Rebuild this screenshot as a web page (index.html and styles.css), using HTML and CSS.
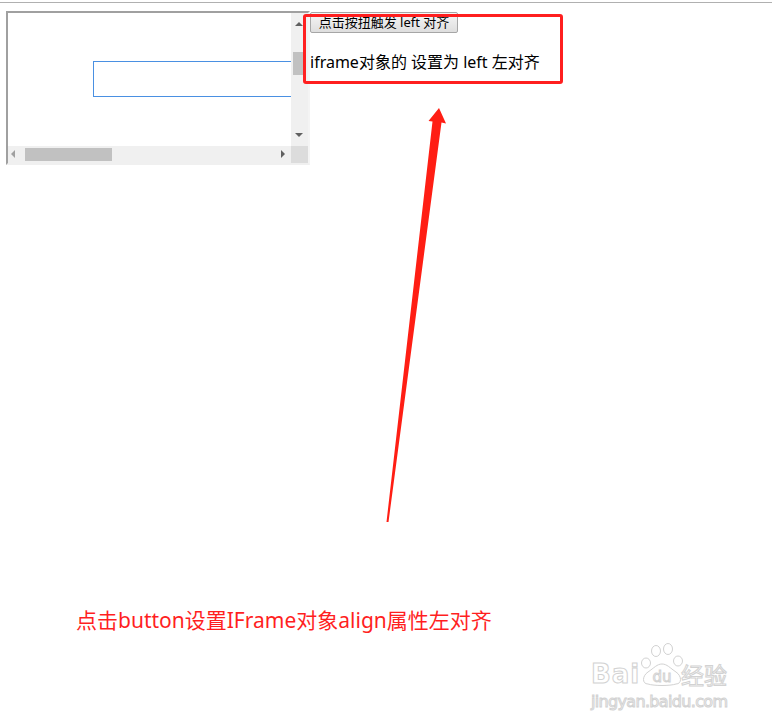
FILE: index.html
```html
<!DOCTYPE html>
<html lang="zh-CN">
<head>
    <meta charset="UTF-8">
    <title>IFrame align 属性</title>
    <link rel="stylesheet" href="styles.css">
</head>
<body>

    <div class="top-line"></div>

    <div class="demo">
        <!-- 模拟 iframe 及其滚动条 -->
        <div class="frame">
            <div class="frame-view">
                <div class="frame-input"></div>
            </div>
            <div class="vbar">
                <span class="arr arr-up"></span>
                <span class="vthumb"></span>
                <span class="arr arr-down"></span>
            </div>
            <div class="hbar">
                <span class="arr arr-left"></span>
                <span class="hthumb"></span>
                <span class="arr arr-right"></span>
            </div>
            <div class="corner"></div>
        </div>

        <div class="side">
            <button class="trigger">点击按扭触发 left 对齐</button>
            <p class="result">iframe对象的 设置为 left 左对齐</p>
        </div>
    </div>

    <p class="caption">点击button设置IFrame对象align属性左对齐</p>

    <!-- 标注 -->
    <div class="mark-box"></div>

    <svg class="mark-arrow" width="772" height="726" viewBox="0 0 772 726">
        <polygon points="439,108 446,123.5 441.5,122.5 388.5,522 386.5,522 432.5,121.5 428.5,121"/>
    </svg>

    <svg class="watermark" width="145" height="74" viewBox="0 0 145 74">
        <g fill="#fff" stroke="#d2d2d2" stroke-width="1">
            <text x="3" y="43" class="wm-bai">Bai</text>
            <ellipse cx="68" cy="11" rx="4.5" ry="5.5"/>
            <ellipse cx="80" cy="9" rx="4.5" ry="5.5"/>
            <ellipse cx="58" cy="23" rx="4.5" ry="5"/>
            <ellipse cx="90" cy="21" rx="4.5" ry="5"/>
            <path d="M60 44 C54 44 54 36 60 32 C66 28 69 24 74 24 C79 24 82 28 88 32 C94 36 94 44 88 44 C82 46 66 46 60 44 Z"/>
            <text x="74" y="42" class="wm-du">du</text>
            <text x="93" y="44" class="wm-jy">经验</text>
            <text x="3" y="67" class="wm-url" textLength="137">jingyan.baidu.com</text>
        </g>
    </svg>

</body>
</html>
```

FILE: styles.css
```css
* {
    box-sizing: border-box;
}

body {
    margin: 0;
    width: 772px;
    height: 726px;
    overflow: hidden;
    position: relative;
    background: #fff;
    font-family: "Noto Sans", "Noto Sans CJK SC", sans-serif;
    color: #000;
}

.top-line {
    margin-top: 2px;
    height: 1px;
    background: #b0b0b0;
}

.demo {
    display: flex;
    align-items: flex-start;
    margin-top: 8px;
    padding-left: 6px;
}

/* iframe 框 */
.frame {
    width: 304px;
    height: 154px;
    border: 2px solid;
    border-color: #a0a0a0 #f4f4f4 #f0f0f0 #a0a0a0;
    display: grid;
    grid-template-columns: 283px 17px;
    grid-template-rows: 133px 17px;
    background: #fff;
}

.frame-view {
    position: relative;
    overflow: hidden;
}

.frame-input {
    margin: 48px 0 0 85px;
    width: 300px;
    height: 36px;
    border: 1px solid #4a90e2;
}

.vbar, .hbar {
    background: #f0f0f0;
    position: relative;
}

.corner {
    background: #dcdcdc;
}

.vthumb {
    position: absolute;
    left: 2px;
    top: 39px;
    width: 13px;
    height: 23px;
    background: #c1c1c1;
}

.hthumb {
    position: absolute;
    left: 17px;
    top: 2px;
    width: 87px;
    height: 13px;
    background: #c1c1c1;
}

.arr {
    position: absolute;
    width: 0;
    height: 0;
    border: 4px solid transparent;
}

.arr-up {
    left: 4px;
    top: 5px;
    border-bottom-color: #606060;
    border-left-width: 4px;
    border-right-width: 4px;
}

.arr-down {
    left: 4px;
    bottom: 5px;
    border-top-color: #606060;
}

.arr-left {
    left: 3px;
    top: 4px;
    border-right-color: #a0a0a0;
    border-left-width: 0;
}

.arr-right {
    left: 273px;
    top: 4px;
    border-left-color: #606060;
    border-right-width: 0;
}

/* 右侧按钮与文字 */
.side {
    display: flex;
    flex-direction: column;
    align-items: flex-start;
}

.trigger {
    margin-top: 1px;
    width: 148px;
    height: 21px;
    padding: 0 6px;
    font-family: "Noto Sans", "Noto Sans CJK SC", sans-serif;
    font-size: 13px;
    line-height: 19px;
    color: #000;
    background: linear-gradient(#f6f6f6, #dedede);
    border: 1px solid #a6a6a6;
    border-radius: 2px;
    white-space: nowrap;
}

.result {
    margin: 19px 0 0;
    font-size: 16px;
    line-height: 20px;
    white-space: nowrap;
}

.caption {
    margin: 441px 0 0 76px;
    font-size: 21px;
    line-height: 28px;
    color: #ff1f1f;
    white-space: nowrap;
}

/* 标注层 */
.mark-box {
    position: absolute;
    left: 303px;
    top: 14px;
    width: 260px;
    height: 70px;
    border: 3px solid #ff1f1f;
    border-radius: 3px;
}

.mark-arrow {
    position: absolute;
    left: 0;
    top: 0;
    fill: #ff1e14;
}

.watermark {
    position: absolute;
    left: 588px;
    top: 640px;
}

.wm-bai {
    font-family: "DejaVu Sans", sans-serif;
    font-weight: bold;
    font-size: 26px;
    letter-spacing: 1px;
}

.wm-du {
    font-family: "DejaVu Sans", sans-serif;
    font-size: 15px;
    text-anchor: middle;
    fill: #fff;
}

.wm-jy {
    font-family: "Noto Sans CJK SC", sans-serif;
    font-size: 23px;
}

.wm-url {
    font-family: "DejaVu Sans", sans-serif;
    font-size: 16px;
}
```
